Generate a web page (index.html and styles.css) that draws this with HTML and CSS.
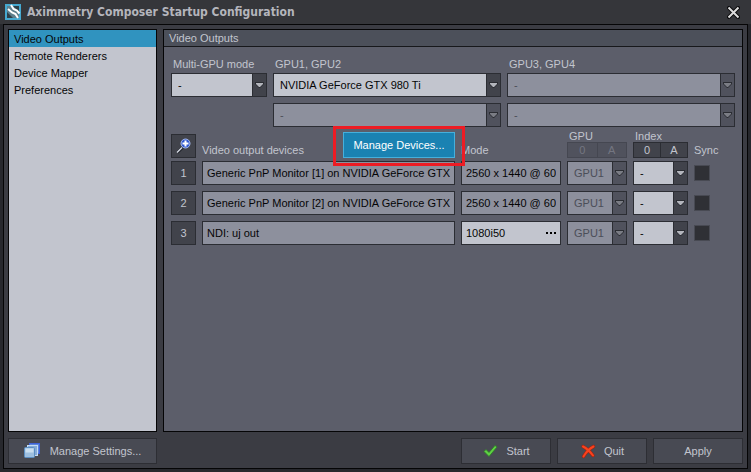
FILE: index.html
```html
<!DOCTYPE html>
<html lang="en">
<head>
<meta charset="utf-8">
<title>Aximmetry Composer Startup Configuration</title>
<link rel="stylesheet" href="styles.css">
</head>
<body>
<svg class="defs" aria-hidden="true">
  <symbol id="arrow" viewBox="0 0 9 6"><path d="M0 0h9v2L5 6H4L0 2z" fill="#2b2d33"/><path d="M1 1h7v1L5 5H4L1 2z" fill="currentColor"/></symbol>
</svg>
<div class="window">
  <header class="titlebar">
    <svg class="logo" viewBox="0 0 16 16" aria-hidden="true">
      <rect width="16" height="16" fill="#46a9d0"/>
      <path d="M2 2h12v12H2z" fill="#5f7f8c"/>
      <path d="M8 2h6v6zM2 8l6 6H2z" fill="#2f3f47"/>
      <path d="M3 5l4 3.500 3.500 1.500L13 14M6 1l2.500 4 3.500 1.500 2.500 3" fill="none" stroke="#fff" stroke-width="2"/>
    </svg>
    <h1>Aximmetry Composer Startup Configuration</h1>
    <button class="close" aria-label="Close">
      <svg viewBox="0 0 13 13" aria-hidden="true"><path d="M2 2l9 9M11 2l-9 9" stroke="#0b0b0d" stroke-width="4" stroke-linecap="square"/><path d="M1.500 1.500l10 10M11.500 1.500l-10 10" stroke="#dcdcdc" stroke-width="2"/></svg>
    </button>
  </header>
  <div class="content">
    <div class="columns">
      <nav class="sidebar">
        <a class="active" href="#outputs">Video Outputs</a>
        <a href="#renderers">Remote Renderers</a>
        <a href="#mapper">Device Mapper</a>
        <a href="#preferences">Preferences</a>
      </nav>
      <main class="panel" id="outputs">
        <h2>Video Outputs</h2>
        <div class="panel-body">
          <div class="gpus">
            <label for="multi">Multi-GPU mode</label>
            <label for="gpu1">GPU1, GPU2</label>
            <label for="gpu3">GPU3, GPU4</label>
            <div class="combo"><select id="multi"><option>-</option></select><span class="drop"><svg><use href="#arrow"/></svg></span></div>
            <div class="combo"><select id="gpu1"><option>NVIDIA GeForce GTX 980 Ti</option></select><span class="drop"><svg><use href="#arrow"/></svg></span></div>
            <div class="combo off"><select id="gpu3" disabled><option>-</option></select><span class="drop"><svg><use href="#arrow"/></svg></span></div>
            <div class="combo off second"><select aria-label="GPU2" disabled><option>-</option></select><span class="drop"><svg><use href="#arrow"/></svg></span></div>
            <div class="combo off"><select aria-label="GPU4" disabled><option>-</option></select><span class="drop"><svg><use href="#arrow"/></svg></span></div>
          </div>
          <table class="devices">
            <colgroup><col class="c-num"><col><col class="c-mode"><col class="c-gpu"><col class="c-index"><col class="c-sync"></colgroup>
            <thead>
              <tr>
                <th><button class="square" aria-label="Identify outputs">
                  <svg viewBox="0 0 16 16" aria-hidden="true"><path d="M1.500 14.500l5-5" stroke="#20232b" stroke-width="3"/><path d="M1 14.500l5-5" stroke="#d5dae4" stroke-width="1.500"/><circle cx="9.500" cy="5.500" r="4.500" fill="#3158cf" stroke="#a9bdf0"/><path d="M9.500 2.500v6M6.500 5.500h6" stroke="#fff" stroke-width="2"/></svg>
                </button></th>
                <th><div class="devices-head"><span>Video output devices</span><span class="marked"><button class="primary">Manage Devices...</button></span></div></th>
                <th>Mode</th>
                <th><span class="caption">GPU</span><div class="pair off"><button disabled>0</button><button disabled>A</button></div></th>
                <th><span class="caption">Index</span><div class="pair"><button>0</button><button>A</button></div></th>
                <th>Sync</th>
              </tr>
            </thead>
            <tbody>
              <tr>
                <td><button class="square">1</button></td>
                <td><input class="field" aria-label="Device 1" readonly value="Generic PnP Monitor [1] on NVIDIA GeForce GTX 980 Ti"></td>
                <td><input class="field" aria-label="Mode 1" readonly value="2560 x 1440 @ 60"></td>
                <td><div class="combo off"><select aria-label="GPU 1" disabled><option>GPU1</option></select><span class="drop"><svg><use href="#arrow"/></svg></span></div></td>
                <td><div class="combo"><select aria-label="Index 1"><option>-</option></select><span class="drop"><svg><use href="#arrow"/></svg></span></div></td>
                <td><input class="check" type="checkbox" aria-label="Sync 1"></td>
              </tr>
              <tr>
                <td><button class="square">2</button></td>
                <td><input class="field" aria-label="Device 2" readonly value="Generic PnP Monitor [2] on NVIDIA GeForce GTX 980 Ti"></td>
                <td><input class="field" aria-label="Mode 2" readonly value="2560 x 1440 @ 60"></td>
                <td><div class="combo off"><select aria-label="GPU 2" disabled><option>GPU1</option></select><span class="drop"><svg><use href="#arrow"/></svg></span></div></td>
                <td><div class="combo"><select aria-label="Index 2"><option>-</option></select><span class="drop"><svg><use href="#arrow"/></svg></span></div></td>
                <td><input class="check" type="checkbox" aria-label="Sync 2"></td>
              </tr>
              <tr>
                <td><button class="square">3</button></td>
                <td><input class="field" aria-label="Device 3" readonly value="NDI: uj out"></td>
                <td><div class="field picker"><input aria-label="Mode 3" value="1080i50"><button aria-label="Choose mode"><svg viewBox="0 0 10 2" aria-hidden="true"><path d="M0 0h2v2H0zM4 0h2v2H4zM8 0h2v2H8z"/></svg></button></div></td>
                <td><div class="combo off"><select aria-label="GPU 3" disabled><option>GPU1</option></select><span class="drop"><svg><use href="#arrow"/></svg></span></div></td>
                <td><div class="combo"><select aria-label="Index 3"><option>-</option></select><span class="drop"><svg><use href="#arrow"/></svg></span></div></td>
                <td><input class="check" type="checkbox" aria-label="Sync 3"></td>
              </tr>
            </tbody>
          </table>
        </div>
      </main>
    </div>
    <footer class="actions">
      <button class="action settings">
        <svg viewBox="0 0 16 16" aria-hidden="true"><rect x="5.500" y="0.500" width="10" height="10" fill="#5b86dc" stroke="#3f62d8"/><rect x="3.500" y="2.500" width="10" height="10" fill="#86abd8" stroke="#c5dcf4"/><rect x="0.500" y="4.500" width="10" height="10" rx="1" fill="#9dbfe0" stroke="#5b8fc4"/><path d="M1.500 5.500h8v4h-8z" fill="#c9def0"/></svg>
        Manage Settings...
      </button>
      <button class="action push">
        <svg viewBox="0 0 16 16" aria-hidden="true"><path d="M2 8.500l2-2 3 3 6-7 2 1.500-8 9.500z" fill="#5fd044" stroke="#2c7f25" stroke-width="0.800"/></svg>
        Start
      </button>
      <button class="action">
        <svg viewBox="0 0 16 16" aria-hidden="true"><path d="M3 3.500c4 2 7 5 10 9M13.500 3.500c-4 2-7 5-10 10" fill="none" stroke="#a8220f" stroke-width="3.200" stroke-linecap="round"/><path d="M3 3.500c4 2 7 5 10 9M13.500 3.500c-4 2-7 5-10 10" fill="none" stroke="#f8431e" stroke-width="2" stroke-linecap="round"/></svg>
        Quit
      </button>
      <button class="action">Apply</button>
    </footer>
  </div>
</div>
</body>
</html>
```
FILE: styles.css
```css
* { box-sizing: border-box; }

body {
  margin: 0;
  font: 11px/16px "Liberation Sans", Arial, sans-serif;
  color: #c2c5ce;
}

button, input, select {
  margin: 0;
  padding: 0;
  border: 0;
  border-radius: 0;
  font: inherit;
  color: inherit;
  background: none;
  appearance: none;
}

svg { display: block; flex: none; }
.defs { position: absolute; width: 0; height: 0; }

.window {
  display: flex;
  flex-direction: column;
  min-height: 100vh;
  padding: 0 3px 3px;
  background: #27282d;
}

.titlebar {
  display: flex;
  align-items: center;
  gap: 6px;
  height: 24px;
  margin: 0 -3px;
  padding: 0 11px 0 5px;
  background: #35363a;
}
.logo { width: 16px; height: 16px; }
.titlebar h1 {
  flex: 1;
  margin: 0;
  font: bold 12px/16px "DejaVu Sans Condensed", "DejaVu Sans", sans-serif;
  color: #b4b5bc;
}
.close svg { width: 13px; height: 13px; }

.content {
  display: flex;
  flex: 1;
  flex-direction: column;
  gap: 6px;
  padding: 4px;
  border: 1px solid #050506;
  background: #3b3c43;
}
.columns { display: flex; flex: 1; gap: 6px; }

.sidebar {
  flex: none;
  width: 149px;
  border: 1px solid #050506;
  background: #c2c5ce;
}
.sidebar a {
  display: block;
  padding: 1px 5px 0;
  color: #050506;
  text-decoration: none;
}
.sidebar .active { background: #3093bf; }

.panel {
  flex: 1;
  min-width: 0;
  border: 1px solid #050506;
  background: #5c5e6a;
}
.panel h2 {
  margin: 0;
  padding: 0 5px;
  border-bottom: 1px solid #17181b;
  font: inherit;
  background: #4c505a;
}
.panel-body { padding: 9px 7px; }

.gpus {
  display: grid;
  grid-template-columns: 96px 1fr 1fr;
  gap: 6px;
}
.gpus label { padding-left: 2px; margin-bottom: -5px; }
.second { grid-column: 2; }

.combo {
  position: relative;
  height: 24px;
  border: 1px solid #2b2d33;
  color: #050506;
  background: #c2c5ce;
}
.combo select { display: block; width: 100%; height: 22px; padding: 0 16px 0 6px; opacity: 1; }
.drop {
  position: absolute;
  top: 0;
  right: 0;
  bottom: 0;
  display: grid;
  place-items: center;
  width: 14px;
  border-left: 1px solid #2b2d33;
  color: #b4b6bd;
  background: #41434b;
  pointer-events: none;
}
.drop svg { width: 9px; height: 6px; }
.combo.off { color: #4b4e58; background: #8d909d; }
.off .drop { color: #7b7d85; background: #50525d; }

.devices {
  width: calc(100% + 12px);
  margin: 3px -6px 0;
  table-layout: fixed;
  border-collapse: separate;
  border-spacing: 6px 0;
}
.c-num { width: 25px; }
.c-mode { width: 100px; }
.c-gpu { width: 60px; }
.c-index { width: 55px; }
.c-sync { width: 41px; }
.devices th { padding: 0; font-weight: normal; text-align: left; vertical-align: bottom; white-space: nowrap; }
.devices td { padding: 3px 0; }

.square {
  display: grid;
  place-items: center;
  width: 25px;
  height: 24px;
  border: 1px solid #2b2d33;
  background: #41434b;
}
.square svg { width: 16px; height: 16px; }

.devices-head { display: flex; align-items: flex-end; justify-content: space-between; }
.marked { position: relative; }
.marked::after {
  content: "";
  position: absolute;
  inset: -6px -10px -8px;
  border: 3px solid #ed1c24;
  pointer-events: none;
}
.primary {
  display: block;
  width: 112px;
  height: 26px;
  border: 1px solid #45b0dc;
  color: #fff;
  background: #1a82b2;
}

.caption { display: block; padding-left: 2px; line-height: 12px; }
.pair { display: flex; height: 16px; border: 1px solid #2b2d33; background: #41434b; }
.pair button { flex: 1; line-height: 14px; }
.pair button + button { border-left: 1px solid #2b2d33; }
.pair.off, .pair.off button { border-color: #454751; color: #747681; background: #50525d; }

.field {
  display: block;
  width: 100%;
  height: 24px;
  padding: 0 4px;
  border: 1px solid #2b2d33;
  color: #050506;
  background: #8d909d;
}
.picker { display: flex; align-items: center; background: #c2c5ce; }
.picker input { flex: 1; min-width: 0; }
.picker svg { width: 10px; height: 2px; }

.check {
  display: block;
  width: 16px;
  height: 16px;
  border: 1px solid #484a53;
  background: #2f3035;
}
.check:checked { background: #3093bf; }

.actions { display: flex; gap: 6px; }
.action {
  display: flex;
  align-items: center;
  justify-content: center;
  gap: 8px;
  width: 90px;
  height: 26px;
  border: 1px solid #2d2e34;
  background: #484a53;
}
.action svg { width: 16px; height: 16px; }
.settings { width: 149px; gap: 10px; }
.push { margin-left: auto; }
```
